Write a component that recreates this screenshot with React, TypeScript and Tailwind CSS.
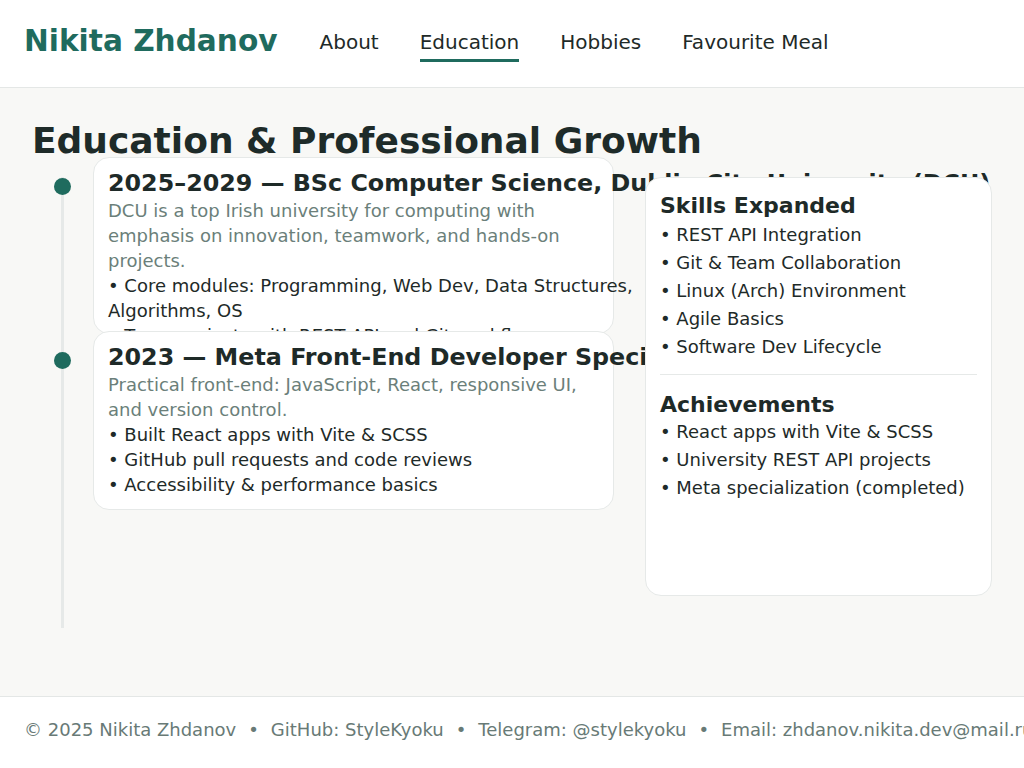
const skills = [
  'REST API Integration',
  'Git & Team Collaboration',
  'Linux (Arch) Environment',
  'Agile Basics',
  'Software Dev Lifecycle',
];

const achievements = [
  'React apps with Vite & SCSS',
  'University REST API projects',
  'Meta specialization (completed)',
];

export default function App() {
  return (
    <div className="w-full min-h-screen bg-[#f8f8f6] font-['DejaVu_Sans',sans-serif] text-[#1e2a28] overflow-hidden">
      {/* Header */}
      <header className="h-[88px] bg-white border-b border-[#e4e7e6] flex items-center px-6">
        <h1 className="text-[29.6px] leading-[36px] font-bold text-[#1f6b5e] mb-[5px] whitespace-nowrap">
          Nikita Zhdanov
        </h1>
        <nav className="flex gap-[41px] ml-[42px] text-[20px] leading-[28px] whitespace-nowrap">
          <a className="pt-[3px] pb-[3px] border-b-[3px] border-transparent">About</a>
          <a className="pt-[3px] pb-[3px] border-b-[3px] border-[#1f6b5e]">Education</a>
          <a className="pt-[3px] pb-[3px] border-b-[3px] border-transparent">Hobbies</a>
          <a className="pt-[3px] pb-[3px] border-b-[3px] border-transparent">Favourite Meal</a>
        </nav>
      </header>

      {/* Main */}
      <main className="h-[608px] px-8 pt-[37px]">
        <h2 className="text-[36px] leading-[32px] font-bold text-[#1e2b29] whitespace-nowrap">
          Education &amp; Professional Growth
        </h2>

        <div className="grid grid-cols-[582px_347px] gap-x-[31px] items-start">
          {/* Timeline */}
          <div className="relative h-[471px]">
            <div className="absolute left-[29px] top-5 bottom-0 w-[3px] bg-[#e6e9e8]" />

            <div className="relative h-[174px]">
              <div className="absolute left-[22px] top-[21px] w-[17px] h-[17px] rounded-full bg-[#1f6b5e]" />
              <div className="relative ml-[61px] h-[177px] bg-white border border-[#e6e9e8] rounded-2xl pt-[14px] px-[14px]">
                <h3 className="text-[23.8px] leading-[23px] font-bold mb-[3px] whitespace-nowrap">
                  2025–2029 — BSc Computer Science, Dublin City University (DCU)
                </h3>
                <p className="text-[18px] leading-[25px] text-[#6b7f7a]">
                  DCU is a top Irish university for computing with emphasis on innovation, teamwork, and hands-on projects.
                </p>
                <ul className="text-[18px] leading-[25px] -mr-[60px]">
                  <li>• Core modules: Programming, Web Dev, Data Structures, Algorithms, OS</li>
                  <li>• Team projects with REST API and Git workflow</li>
                </ul>
              </div>
            </div>

            <div className="relative">
              <div className="absolute left-[22px] top-[21px] w-[17px] h-[17px] rounded-full bg-[#1f6b5e]" />
              <div className="relative ml-[61px] bg-white border border-[#e6e9e8] rounded-2xl pt-[14px] pb-[12px] px-[14px]">
                <h3 className="text-[23.8px] leading-[23px] font-bold mb-[3px] whitespace-nowrap">
                  2023 — Meta Front-End Developer Specialization
                </h3>
                <p className="text-[18px] leading-[25px] text-[#6b7f7a]">
                  Practical front-end: JavaScript, React, responsive UI, and version control.
                </p>
                <ul className="text-[18px] leading-[25px]">
                  <li>• Built React apps with Vite &amp; SCSS</li>
                  <li>• GitHub pull requests and code reviews</li>
                  <li>• Accessibility &amp; performance basics</li>
                </ul>
              </div>
            </div>
          </div>

          {/* Sidebar */}
          <aside className="relative mt-5 h-[419px] bg-white border border-[#e6e9e8] rounded-2xl pt-[16px] px-[14px]">
            <h3 className="text-[22px] leading-[24px] font-bold mb-[3px]">Skills Expanded</h3>
            <ul className="text-[18px] leading-[28px]">
              {skills.map((s) => (
                <li key={s}>• {s}</li>
              ))}
            </ul>
            <div className="mt-[13px] h-px bg-[#e6e9e8]" />
            <h3 className="mt-[18px] text-[22px] leading-[24px] font-bold mb-px">Achievements</h3>
            <ul className="text-[18px] leading-[28px]">
              {achievements.map((s) => (
                <li key={s}>• {s}</li>
              ))}
            </ul>
          </aside>
        </div>
      </main>

      {/* Footer */}
      <footer className="h-[72px] bg-white border-t border-[#e4e7e6] px-6 pt-5 text-[18px] leading-[25px] text-[#687a76] whitespace-nowrap">
        © 2025 Nikita Zhdanov
        <span className="px-3">•</span>
        GitHub: StyleKyoku
        <span className="px-3">•</span>
        Telegram: @stylekyoku
        <span className="px-3">•</span>
        Email: zhdanov.nikita.dev@mail.ru
      </footer>
    </div>
  );
}
